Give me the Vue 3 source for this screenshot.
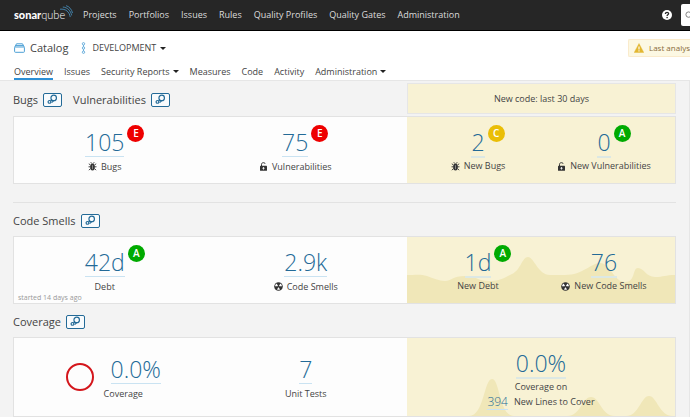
<template>
  <div class="page">
    <header class="topbar">
      <a class="logo" href="#" aria-label="sonarqube">
        <span class="logo-text"><b>sonar</b>qube</span>
        <svg class="logo-waves" viewBox="0 0 15 14" aria-hidden="true">
          <path d="M0 4.5C6 4 10 7 11 13M3 2.2c5 .3 8.500 4 9.500 9M6.500.7c3.500 1 6 4 7 8" />
        </svg>
      </a>
      <nav class="main-nav">
        <a v-for="item in mainNav" :key="item" href="#">{{ item }}</a>
      </nav>
      <button class="help" type="button" aria-label="Help">
        <svg viewBox="0 0 10 10">
          <circle cx="5" cy="5" r="5" fill="#fff" />
          <path d="M3.400 3.900C3.400 1.800 6.700 1.900 6.600 3.800 6.500 4.900 5.100 4.800 5.100 6" fill="none" stroke="#262626" stroke-width="1.300" />
          <rect x="4.400" y="6.900" width="1.400" height="1.300" fill="#262626" />
        </svg>
      </button>
      <label class="search">
        <svg viewBox="0 0 10 10"><circle cx="4" cy="4" r="3" /><path d="M6.200 6.200 9 9" /></svg>
        <input type="search" aria-label="Search">
      </label>
    </header>

    <div class="project">
      <div class="project-head">
        <a class="project-name" href="#">
          <svg class="project-icon" viewBox="0 0 11 10" aria-hidden="true">
            <path d="M2.500.8h6l1.800 3.400M2.500.8.700 4.200M2 2.600h7" />
            <rect x=".6" y="4" width="9.800" height="5.300" rx=".8" />
          </svg>
          Catalog
        </a>
        <button class="branch" type="button">
          <svg class="branch-icon" viewBox="0 0 5 12" aria-hidden="true">
            <path d="M2.500 2v8" />
            <circle cx="2.500" cy="1.800" r="1.200" /><circle cx="2.500" cy="6" r="1.200" /><circle cx="2.500" cy="10.200" r="1.200" />
          </svg>
          DEVELOPMENT
          <i class="caret"></i>
        </button>
        <div class="warning">
          <svg viewBox="0 0 10 10" aria-hidden="true">
            <path d="M5 .5 9.800 9.500H.2z" fill="#e2b731" stroke="#e2b731" stroke-width=".4" stroke-linejoin="round" />
            <path d="M5 3.500v3M5 7.300v1.200" stroke="#fff" stroke-width="1.100" />
          </svg>
          <span>Last analys</span>
        </div>
      </div>
      <nav class="tabs">
        <a v-for="tab in tabs" :key="tab.name" href="#" :class="{ active: tab.active }">
          {{ tab.name }}<i v-if="tab.menu" class="caret"></i>
        </a>
      </nav>
    </div>

    <main class="overview">
      <section v-for="section in sections" :key="section.id" :class="['domain', section.id]">
        <div class="domain-head">
          <div class="titles">
            <h2 v-for="title in section.titles" :key="title">
              {{ title }}
              <button type="button" :aria-label="title + ' activity'">
                <svg viewBox="0 0 12 12">
                  <circle cx="7.300" cy="4.300" r="3" />
                  <circle cx="2.700" cy="8.600" r="1.500" />
                  <path d="M5.300 6.500 3.800 7.600M5 9.400l2.200-1.900" />
                </svg>
              </button>
            </h2>
          </div>
          <div v-if="section.id === 'bugs'" class="leak-title">New code: last 30 days</div>
        </div>

        <div class="card">
          <div v-for="(panel, i) in section.panels" :key="i" :class="['panel', i ? 'leak' : 'overall']">
            <svg v-if="i && section.graph" class="graph" :viewBox="section.graphBox" preserveAspectRatio="none" aria-hidden="true">
              <path :d="section.graph" />
            </svg>
            <div v-for="m in panel" :key="m.label" :class="['measure', { rated: m.rating, ring: m.ring }]">
              <svg v-if="m.ring" class="donut" viewBox="0 0 28 28" aria-hidden="true"><circle cx="14" cy="14" r="13" /></svg>
              <div class="measure-body">
                <div class="value">
                  <a href="#">{{ m.value }}</a>
                  <span v-if="m.rating" :class="['rating', 'rating-' + m.rating]">{{ m.rating }}</span>
                </div>
                <div class="label">
                  <svg v-if="m.icon === 'bug'" viewBox="0 0 8 9" aria-hidden="true">
                    <path d="M2.300.2 3.200 1.500M5.700.2 4.800 1.500M.3 1.800 2 3M7.700 1.800 6 3M0 4.800h8M.4 8.200 2 6.500M7.600 8.200 6 6.500" fill="none" stroke="#333" stroke-width=".9" />
                    <ellipse cx="4" cy="5" rx="2.300" ry="3.600" />
                    <path d="M4 3.200v4" stroke="#aaa" stroke-width=".7" />
                  </svg>
                  <svg v-else-if="m.icon === 'lock'" viewBox="0 0 8 9" aria-hidden="true">
                    <path d="M2 4V2.300C2 .2 5.500.2 5.700 2" fill="none" stroke="#333" />
                    <rect x=".5" y="3.800" width="7" height="5" rx=".6" />
                    <path d="M4 5v2.600M2.900 6.300h2.200" stroke="#fff" stroke-width=".8" />
                  </svg>
                  <svg v-else-if="m.icon === 'smell'" viewBox="0 0 9 9" aria-hidden="true">
                    <circle cx="4.500" cy="4.500" r="4.300" />
                    <path d="M4.100 3.900 2.600 1.500A3.500 3.500 0 0 0 1 4.300h2.700zM4.900 3.900 6.400 1.500A3.500 3.500 0 0 1 8 4.300H5.300zM4.500 5 3 7.500a3.500 3.500 0 0 0 3 0z" fill="#fff" />
                    <circle cx="4.500" cy="4.400" r=".8" />
                  </svg>
                  <span>{{ m.label }}</span>
                </div>
                <div v-if="m.lines" class="lines">
                  <a href="#">{{ m.lines }}</a>
                  <span>New Lines to Cover</span>
                </div>
              </div>
            </div>
          </div>
          <small v-if="section.note" class="note">{{ section.note }}</small>
        </div>
      </section>
    </main>
  </div>
</template>

<script setup>
const mainNav = ['Projects', 'Portfolios', 'Issues', 'Rules', 'Quality Profiles', 'Quality Gates', 'Administration']

const tabs = [
  { name: 'Overview', active: true },
  { name: 'Issues' },
  { name: 'Security Reports', menu: true },
  { name: 'Measures' },
  { name: 'Code' },
  { name: 'Activity' },
  { name: 'Administration', menu: true }
]

const sections = [
  {
    id: 'bugs',
    titles: ['Bugs', 'Vulnerabilities'],
    panels: [
      [
        { value: '105', label: 'Bugs', icon: 'bug', rating: 'E' },
        { value: '75', label: 'Vulnerabilities', icon: 'lock', rating: 'E' }
      ],
      [
        { value: '2', label: 'New Bugs', icon: 'bug', rating: 'C' },
        { value: '0', label: 'New Vulnerabilities', icon: 'lock', rating: 'A' }
      ]
    ]
  },
  {
    id: 'smells',
    titles: ['Code Smells'],
    note: 'started 14 days ago',
    graphBox: '0 0 268 66',
    graph: 'M0 38C8 38 14 37 20 39S32 44 38 44 46 39 58 39 70 44 82 44 96 41 105 37 115 20 121 20 131 38 143 38H158C176 38 184 26 193 26 203 26 207 45 218 45S225 31 231 31 239 40 248 40 258 38 268 38V66H0z',
    panels: [
      [
        { value: '42d', label: 'Debt', rating: 'A' },
        { value: '2.9k', label: 'Code Smells', icon: 'smell' }
      ],
      [
        { value: '1d', label: 'New Debt', rating: 'A' },
        { value: '76', label: 'New Code Smells', icon: 'smell' }
      ]
    ]
  },
  {
    id: 'coverage',
    titles: ['Coverage'],
    graphBox: '0 0 268 78',
    graph: 'M62 78C77 78 77 41 85 41S92 78 107 78H160C174 78 175 59 184 59S194 78 208 78H219C232 78 234 58 242 58S252 78 266 78z',
    panels: [
      [
        { value: '0.0%', label: 'Coverage', ring: true },
        { value: '7', label: 'Unit Tests' }
      ],
      [
        { value: '0.0%', label: 'Coverage on', lines: '394' }
      ]
    ]
  }
]
</script>

<style>
body {
  margin: 0;
  background: #f3f3f3;
}
</style>

<style scoped>
.page {
  overflow: hidden;
  font-family: "Open Sans", "Noto Sans", sans-serif;
  font-size: 9px;
  line-height: 12px;
  color: #444;
}

a {
  color: inherit;
  text-decoration: none;
}

button {
  padding: 0;
  border: 0;
  background: none;
  font: inherit;
  color: inherit;
  cursor: pointer;
}

svg {
  display: block;
  flex: none;
}

.topbar {
  display: flex;
  align-items: center;
  height: 30px;
  padding-left: 14px;
  background: #262626;
  border-bottom: 1px solid #000;
}

.logo {
  display: flex;
  width: 69px;
  color: #fff;
}

.logo-text {
  font-family: Lato, "Open Sans", sans-serif;
  font-size: 11px;
  font-weight: 300;
}

.logo-text b {
  font-weight: 900;
}

.logo-waves {
  width: 14px;
  height: 13px;
  margin: -4px 0 0 -5px;
  fill: none;
  stroke: #4b9fd5;
  stroke-width: 0.8;
}

.main-nav {
  display: flex;
  flex: 1;
  gap: 12px;
  color: #ddd;
  white-space: nowrap;
}

.help svg {
  width: 10px;
  height: 10px;
}

.search {
  display: flex;
  align-items: center;
  flex: 0 0 9px;
  height: 22px;
  margin-left: 9px;
  overflow: hidden;
  background: #fff;
  border-radius: 2px 0 0 2px;
}

.search svg {
  width: 9px;
  height: 9px;
  margin-left: 4px;
  fill: none;
  stroke: #777;
}

.search input {
  width: 100px;
  border: 0;
}

.project {
  background: #fff;
  border-bottom: 1px solid #e6e6e6;
}

.project-head {
  display: flex;
  align-items: center;
  height: 18px;
  padding: 8px 0 8px 14px;
}

.project-name {
  display: flex;
  align-items: center;
  gap: 5px;
  font-size: 11px;
}

.project-icon {
  width: 11px;
  height: 10px;
  fill: none;
  stroke: #4b9fd5;
}

.branch {
  display: flex;
  align-items: center;
  gap: 4px;
  margin-left: 13px;
}

.branch-icon {
  width: 5px;
  height: 12px;
  margin-right: 2px;
  fill: #fff;
  stroke: #4b9fd5;
  stroke-width: 0.8;
}

.caret {
  border: 3px solid transparent;
  border-top-color: #222;
  border-bottom: 0;
}

.warning {
  display: flex;
  align-items: center;
  box-sizing: border-box;
  flex: none;
  gap: 5px;
  height: 18px;
  margin-left: auto;
  padding-left: 5px;
  font-size: 8px;
  white-space: nowrap;
  color: #8a6d3b;
  background: #fcf8e3;
  border: 1px solid #faebcc;
  border-right: 0;
  border-radius: 2px 0 0 2px;
}

.warning svg {
  width: 10px;
  height: 10px;
}

.tabs {
  display: flex;
  gap: 11px;
  padding-left: 14px;
  white-space: nowrap;
}

.tabs a {
  display: flex;
  align-items: center;
  gap: 3px;
  height: 13px;
  border-bottom: 2px solid transparent;
}

.tabs a.active {
  border-color: #2d8fd5;
}

.overview {
  padding: 0 13px;
  border-right: 1px solid #e6e6e6;
}

.domain-head {
  display: grid;
  grid-template-columns: 394fr 269fr;
  align-items: center;
  height: 33px;
}

.bugs .domain-head {
  height: 35px;
}

.smells {
  margin-top: 18px;
  border-top: 1px solid #e2e2e2;
}

.titles {
  display: flex;
  gap: 11px;
  padding-top: 2px;
}

h2 {
  display: flex;
  align-items: center;
  gap: 5px;
  margin: 0;
  font-size: 11px;
  font-weight: 400;
}

h2 button {
  display: flex;
  align-items: center;
  justify-content: center;
  box-sizing: border-box;
  width: 19px;
  height: 14px;
  background: #f8fbfd;
  border: 1px solid #236a97;
  border-radius: 2px;
}

h2 svg {
  width: 11px;
  height: 11px;
  fill: none;
  stroke: #236a97;
  stroke-width: 1.3;
}

.leak-title {
  box-sizing: border-box;
  height: 31px;
  border: 1px solid #e6e6e6;
  background: #f8f2d4;
  line-height: 30px;
  text-align: center;
}

.card {
  position: relative;
  display: grid;
  grid-template-columns: 393fr 268fr;
  min-height: 66px;
  border: 1px solid #e2e2e2;
  background: #fdfdfd;
}

.coverage .card {
  min-height: 78px;
}

.panel {
  position: relative;
  display: flex;
  align-items: center;
  padding: 0 6px;
}

.leak {
  padding: 0 8px;
  background: #f8f2d4;
}

.coverage .leak {
  padding-top: 4px;
}

.graph {
  position: absolute;
  inset: 0;
  width: 100%;
  height: 100%;
  fill: #f0e7b8;
}

.measure {
  position: relative;
  display: flex;
  flex: 1 1 0;
  align-items: center;
  justify-content: center;
}

.overall .rated .measure-body {
  margin-right: 21px;
}

.measure-body {
  display: flex;
  flex-direction: column;
  align-items: center;
  gap: 4px;
}

.leak .measure-body {
  gap: 2px;
}

.value {
  position: relative;
}

.value a {
  display: block;
  color: #236a97;
  font-size: 23px;
  font-weight: 300;
  line-height: 28px;
  border-bottom: 1px solid #cae3f2;
}

.leak .value a {
  border-bottom: 2px solid #dce8e4;
}

.rating {
  position: absolute;
  top: -3px;
  left: 100%;
  width: 17px;
  height: 17px;
  margin-left: 3px;
  border-radius: 50%;
  color: #fff;
  font-size: 10px;
  font-weight: 600;
  line-height: 17px;
  text-align: center;
}

.rating-A {
  background: #0a0;
}

.rating-C {
  background: #eabe06;
}

.rating-E {
  background: #e00;
}

.label {
  display: flex;
  align-items: center;
  gap: 4px;
  white-space: nowrap;
}

.label svg {
  width: 9px;
  height: 9px;
  fill: #333;
}

.ring {
  gap: 10px;
}

.ring .measure-body {
  align-items: flex-start;
  margin-right: 4px;
}

.ring .value {
  margin-left: 7px;
}

.donut {
  width: 28px;
  height: 28px;
  fill: none;
  stroke: #d4161c;
  stroke-width: 2;
}

.lines {
  display: flex;
  align-items: center;
  gap: 6px;
}

.lines a {
  color: #236a97;
  font-size: 12px;
  font-weight: 300;
  line-height: 14px;
  border-bottom: 1px solid #cae3f2;
}

.note {
  position: absolute;
  bottom: 0;
  left: 4px;
  color: #999;
  font-size: 7px;
  line-height: 11px;
}
</style>
